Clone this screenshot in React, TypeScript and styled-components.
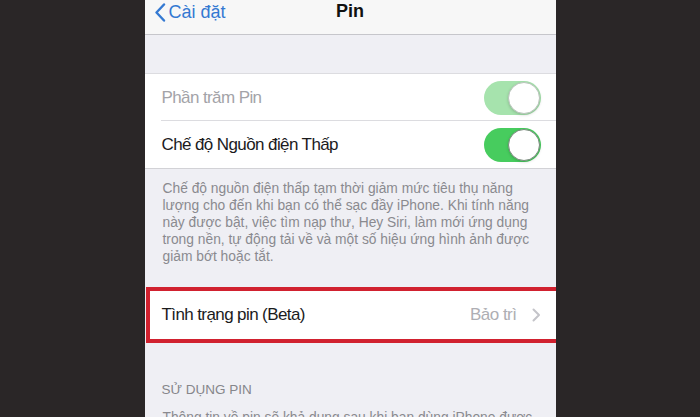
import React from "react";
import styled, { createGlobalStyle } from "styled-components";

const Global = createGlobalStyle`
  html, body {
    margin: 0;
    padding: 0;
    background: #2a2627;
  }
  body {
    font-family: "Liberation Sans", "Noto Sans", Arial, sans-serif;
    -webkit-font-smoothing: antialiased;
  }
`;

const Page = styled.div`
  display: flex;
  justify-content: center;
  width: 700px;
  height: 417px;
  overflow: hidden;
`;

const Screen = styled.div`
  width: 411px;
  height: 417px;
  overflow: hidden;
  background: #efeff4;
  display: flex;
  flex-direction: column;
`;

const NavBar = styled.div`
  height: 35px;
  flex: none;
  box-sizing: border-box;
  background: #f7f7f7;
  border-bottom: 1px solid #c6c6cb;
  position: relative;
  display: flex;
  align-items: flex-start;
  justify-content: center;
`;

const BackButton = styled.div`
  position: absolute;
  left: 9px;
  top: 1px;
  display: flex;
  align-items: center;
  gap: 3px;
  color: #3479d2;
  font-size: 18px;
  line-height: 22px;
`;

const Title = styled.div`
  font-size: 18px;
  font-weight: 700;
  line-height: 22px;
  color: #111;
`;

const SectionGap = styled.div<{ $h: number }>`
  height: ${(p) => p.$h}px;
  flex: none;
`;

const Group = styled.div`
  background: #fff;
  border-top: 1px solid #dcdce0;
  border-bottom: 1px solid #d2d2d6;
  flex: none;
`;

const Row = styled.div<{ $divider?: boolean; $h?: number; $pl?: number }>`
  height: ${(p) => p.$h ?? 47}px;
  display: flex;
  align-items: center;
  padding: 0 15px 0 ${(p) => p.$pl ?? 17}px;
  position: relative;
  ${(p) =>
    p.$divider &&
    `
    &::after {
      content: "";
      position: absolute;
      left: 16px;
      right: 0;
      bottom: 0;
      height: 1px;
      background: #dcdce0;
    }
  `}
`;

const Label = styled.span<{ $muted?: boolean }>`
  flex: 1;
  font-size: 17px;
  letter-spacing: -0.6px;
  color: ${(p) => (p.$muted ? "#a3a3a8" : "#1b1b1d")};
`;

const Toggle = styled.div<{ $dim?: boolean }>`
  width: 57px;
  height: 34px;
  border-radius: 17px;
  box-sizing: border-box;
  background: ${(p) => (p.$dim ? "#a6e3ad" : "#47cc5e")};
  position: relative;
  flex: none;
  &::after {
    content: "";
    position: absolute;
    right: 1px;
    top: 1px;
    width: 32px;
    height: 32px;
    box-sizing: border-box;
    border-radius: 50%;
    background: #fff;
    border: 1.5px solid ${(p) => (p.$dim ? "#b9c4bb" : "#7a8a7d")};
    box-shadow: 0 1px 3px rgba(0, 0, 0, 0.18);
  }
`;

const Footer = styled.div<{ $pt?: number }>`
  padding: ${(p) => p.$pt ?? 11}px 10px 0 18px;
  font-size: 13.8px;
  line-height: 17px;
  color: #8a8a8f;
  white-space: nowrap;
  flex: none;
`;

const Highlight = styled.div`
  border: 4px solid #d1212f;
  border-right: none;
  margin-left: 1px;
  background: #fff;
  flex: none;
`;

const Value = styled.span`
  font-size: 17px;
  letter-spacing: -0.5px;
  color: #aeaeb3;
  margin-right: 15px;
`;

const SectionHeader = styled.div`
  padding: 0 17px;
  font-size: 13.5px;
  line-height: 17px;
  color: #86868b;
  text-transform: uppercase;
  flex: none;
`;

const BackChevron = () => (
  <svg width="12" height="19" viewBox="0 0 12 19" aria-hidden>
    <path
      d="M10 1.5 L2.5 9.5 L10 17.5"
      fill="none"
      stroke="#3479d2"
      strokeWidth="2.4"
      strokeLinecap="round"
      strokeLinejoin="round"
    />
  </svg>
);

const Disclosure = () => (
  <svg width="9" height="14" viewBox="0 0 9 14" aria-hidden>
    <path
      d="M1.5 1.5 L7 7 L1.5 12.5"
      fill="none"
      stroke="#c4c4c9"
      strokeWidth="2"
      strokeLinecap="round"
      strokeLinejoin="round"
    />
  </svg>
);

export default function App() {
  return (
    <>
      <Global />
      <Page>
        <Screen>
          <NavBar>
            <BackButton>
              <BackChevron />
              <span>Cài đặt</span>
            </BackButton>
            <Title>Pin</Title>
          </NavBar>

          <SectionGap $h={38} />

          <Group>
            <Row $divider>
              <Label $muted>Phần trăm Pin</Label>
              <Toggle $dim />
            </Row>
            <Row>
              <Label>Chế độ Nguồn điện Thấp</Label>
              <Toggle />
            </Row>
          </Group>

          <Footer>
            Chế độ nguồn điện thấp tạm thời giảm mức tiêu thụ năng
            <br />
            lượng cho đến khi bạn có thể sạc đầy iPhone. Khi tính năng
            <br />
            này được bật, việc tìm nạp thư, Hey Siri, làm mới ứng dụng
            <br />
            trong nền, tự động tải về và một số hiệu ứng hình ảnh được
            <br />
            giảm bớt hoặc tắt.
          </Footer>

          <SectionGap $h={22} />

          <Highlight>
            <Row $h={48} $pl={12}>
              <Label>Tình trạng pin (Beta)</Label>
              <Value>Bảo trì</Value>
              <Disclosure />
            </Row>
          </Highlight>

          <SectionGap $h={38} />

          <SectionHeader>Sử dụng pin</SectionHeader>

          <Footer $pt={11}>
            Thông tin về pin sẽ khả dụng sau khi bạn dùng iPhone được
          </Footer>
        </Screen>
      </Page>
    </>
  );
}
